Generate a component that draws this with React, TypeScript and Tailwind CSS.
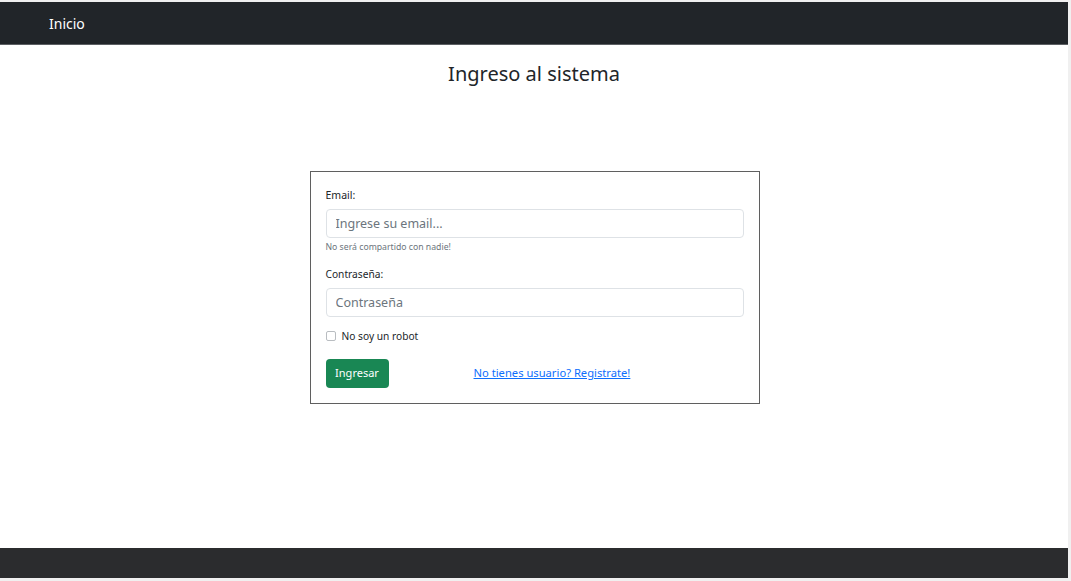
import React from "react";

export default function App() {
  return (
    <div
      className="h-[581px] w-[1071px] bg-[#f0f0f0] pt-[2px] pr-[3px] pb-[3px] flex flex-col"
      style={{ fontFamily: '"Noto Sans", "Open Sans", sans-serif' }}
    >
      <nav className="h-[43px] bg-[#212529] border-b border-[#5c5f63] flex items-center pl-[49px]">
        <span className="text-white text-[14px]">Inicio</span>
      </nav>
      <main className="flex-1 bg-white flex flex-col items-center">
        <h1 className="text-[#212529] text-[20px] mt-[14px] leading-[30px]">Ingreso al sistema</h1>
        <form className="mt-[82px] ml-[1px] w-[450px] border border-[#5f5f5f] px-[15px] pt-[16px] pb-[15px] text-[#212529]">
          <label className="block text-[10.5px] leading-[14px] mb-[7px]">Email:</label>
          <input
            className="w-full h-[29px] border border-[#dee2e6] rounded-[4px] px-[9px] text-[12.5px] placeholder-[#6c757d] outline-none"
            placeholder="Ingrese su email..."
          />
          <div className="text-[8.7px] text-[#6c757d] mt-[3px] leading-[12px]">No será compartido con nadie!</div>
          <label className="block text-[10.2px] leading-[14px] mt-[14px] mb-[7px]">Contraseña:</label>
          <input
            type="password"
            className="w-full h-[29px] border border-[#dee2e6] rounded-[4px] px-[9px] text-[12.5px] placeholder-[#6c757d] outline-none"
            placeholder="Contraseña"
          />
          <div className="flex items-center mt-[12px] gap-[6px]">
            <span className="w-[10px] h-[10px] border border-[#b9bdc1] rounded-[2px] bg-white" />
            <span className="text-[10.2px] leading-[14px]">No soy un robot</span>
          </div>
          <div className="flex items-center mt-[16px]">
            <button
              type="button"
              className="bg-[#198754] text-white text-[11px] h-[29px] w-[63px] rounded-[4px]"
            >
              Ingresar
            </button>
            <a className="ml-[85px] text-[11.2px] text-[#0d6efd] underline cursor-pointer">
              No tienes usuario? Registrate!
            </a>
          </div>
        </form>
      </main>
      <footer className="h-[30px] bg-[#2b2c2e]" />
    </div>
  );
}
